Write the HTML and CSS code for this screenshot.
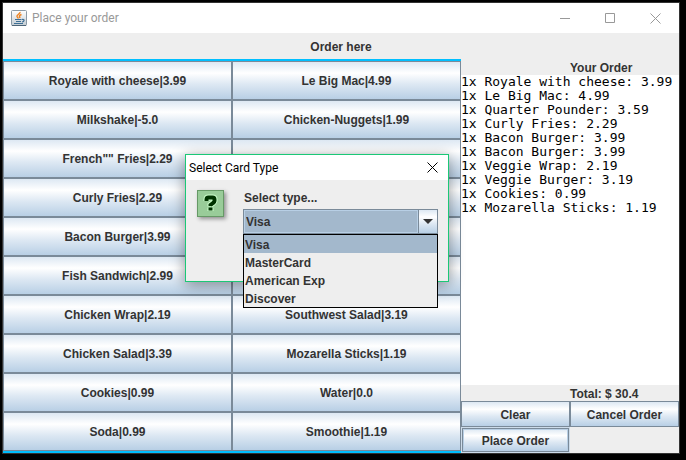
FILE: index.html
```html
<!DOCTYPE html>
<html lang="en">
<head>
<meta charset="utf-8">
<title>Place your order</title>
<link rel="stylesheet" href="styles.css">
</head>
<body>
<div class="window">
  <header class="titlebar">
    <svg class="java" width="16" height="16" viewBox="0 0 16 16" aria-hidden="true">
      <defs><linearGradient id="tile" x1="0" y1="0" x2="0" y2="1"><stop offset="0" stop-color="#fff"/><stop offset="1" stop-color="#c3ccd3"/></linearGradient></defs>
      <rect x=".5" y=".5" width="15" height="15" rx="1" fill="url(#tile)" stroke="#8b9aa6"/>
      <path d="M1 15.5H15" stroke="#4d6578"/>
      <path d="M9 2C9.500 4 5.500 4.500 6 6.500Q6.500 7.500 7.500 8.500M10.500 4.500C7.500 5.500 8.500 6.500 9 8" fill="none" stroke="#ee8422" stroke-width="1.500"/>
      <path d="M4 9.500H10.500M5 11.500H10M3 13.500H12M11 9.500C14 9 13.500 11.500 11 12" fill="none" stroke="#3f7096" stroke-width="1.200"/>
    </svg>
    <h1 class="window-title">Place your order</h1>
    <div class="controls">
      <button class="control" aria-label="Minimize"><svg width="11" height="11" viewBox="0 0 11 11"><path d="M0 5.500H10"/></svg></button>
      <button class="control" aria-label="Maximize"><svg width="11" height="11" viewBox="0 0 11 11"><path d="M.5 .5H9.500V9.500H.5Z"/></svg></button>
      <button class="control" aria-label="Close"><svg width="11" height="11" viewBox="0 0 11 11"><path d="M.5 .5L10.500 10.500M10.500 .5L.5 10.500"/></svg></button>
    </div>
  </header>
  <h2 class="heading">Order here</h2>
  <main class="content">
    <section class="menu" aria-label="Menu">
      <button class="metal">Royale with cheese|3.99</button>
      <button class="metal">Le Big Mac|4.99</button>
      <button class="metal">Milkshake|-5.0</button>
      <button class="metal">Chicken-Nuggets|1.99</button>
      <button class="metal">French"" Fries|2.29</button>
      <button class="metal"></button>
      <button class="metal">Curly Fries|2.29</button>
      <button class="metal"></button>
      <button class="metal">Bacon Burger|3.99</button>
      <button class="metal"></button>
      <button class="metal">Fish Sandwich|2.99</button>
      <button class="metal"></button>
      <button class="metal">Chicken Wrap|2.19</button>
      <button class="metal">Southwest Salad|3.19</button>
      <button class="metal">Chicken Salad|3.39</button>
      <button class="metal">Mozarella Sticks|1.19</button>
      <button class="metal">Cookies|0.99</button>
      <button class="metal">Water|0.0</button>
      <button class="metal">Soda|0.99</button>
      <button class="metal">Smoothie|1.19</button>
    </section>
    <section class="order">
      <label class="order-label" for="order-list">Your Order</label>
      <textarea class="order-list" id="order-list" wrap="off" spellcheck="false">1x Royale with cheese: 3.99
1x Le Big Mac: 4.99
1x Quarter Pounder: 3.59
1x Curly Fries: 2.29
1x Bacon Burger: 3.99
1x Bacon Burger: 3.99
1x Veggie Wrap: 2.19
1x Veggie Burger: 3.19
1x Cookies: 0.99
1x Mozarella Sticks: 1.19</textarea>
      <p class="total">Total: $ 30.4</p>
      <div class="actions">
        <button class="metal">Clear</button>
        <button class="metal">Cancel Order</button>
        <button class="metal primary">Place Order</button>
      </div>
    </section>
  </main>
</div>

<div class="dialog" role="dialog" aria-labelledby="dialog-title">
  <header class="dialog-bar">
    <h2 class="dialog-title" id="dialog-title">Select Card Type</h2>
    <button class="dialog-close" aria-label="Close"><svg width="11" height="11" viewBox="0 0 11 11"><path d="M.5 .5L10.500 10.500M10.500 .5L.5 10.500"/></svg></button>
  </header>
  <div class="dialog-body">
    <div class="question">
      <svg width="27" height="27" viewBox="0 0 27 27" aria-hidden="true">
        <path class="mark-edge" d="M9.500 11V9.500Q9.500 7.500 11.500 7.500H15.500Q17.500 7.500 17.500 9.500V11Q17.500 12 16 13L13.500 15V16.500M13.500 17.500V21"/>
        <path class="mark" d="M9.500 11V9.500Q9.500 7.500 11.500 7.500H15.500Q17.500 7.500 17.500 9.500V11Q17.500 12 16 13L13.500 15V16M13.500 17.500V20.500"/>
      </svg>
    </div>
    <div class="field">
      <label class="field-label" for="card">Select type...</label>
      <div class="combo">
        <select class="combo-box" id="card">
          <option>Visa</option>
          <option>MasterCard</option>
          <option>American Exp</option>
          <option>Discover</option>
        </select>
        <span class="combo-arrow"><svg width="10" height="5" viewBox="0 0 10 5"><path d="M0 0H10L5 5Z"/></svg></span>
        <ul class="popup" role="listbox" aria-label="Card types">
          <li class="choice selected" role="option" aria-selected="true">Visa</li>
          <li class="choice" role="option">MasterCard</li>
          <li class="choice" role="option">American Exp</li>
          <li class="choice" role="option">Discover</li>
        </ul>
      </div>
    </div>
  </div>
</div>
</body>
</html>
```
FILE: styles.css
```css
* { box-sizing: border-box; }

:root {
  --line: #7a8a99;
  --panel: #eee;
  --ink: #333;
  --select: #a3b8cc;
  --metal: linear-gradient(#dde8f3, #fff 30%, #dde8f3 60%, #b8cfe5);
}

body {
  margin: 0;
  min-height: 100vh;
  display: flex;
  padding: 2px 6px 6px 2px;
  background: #000;
  color: var(--ink);
  font: bold 12px/16px "Liberation Sans", Arial, sans-serif;
}

h1, h2, p, ul { margin: 0; padding: 0; font: inherit; }
button, select { font: inherit; color: inherit; margin: 0; border-radius: 0; }

.window {
  flex: 1;
  display: flex;
  flex-direction: column;
  border: 1px solid #333;
  background: var(--panel);
}

.titlebar {
  display: flex;
  align-items: center;
  height: 30px;
  padding: 0 1px 0 8px;
  gap: 5px;
  background: #fff;
}

.window-title {
  flex: 1;
  color: #999;
  font: 12px/16px Roboto, "Noto Sans", sans-serif;
}

.controls { display: flex; }

.control {
  width: 45px;
  height: 28px;
  padding: 0;
  border: 0;
  background: none;
}

.control svg, .dialog-close svg { display: block; margin: auto; fill: none; stroke: #999; }

.heading { height: 26px; line-height: 28px; text-align: center; }

.content {
  flex: 1;
  display: grid;
  grid-template-columns: minmax(0, 21fr) minmax(0, 10fr);
}

.menu {
  display: grid;
  grid-template-columns: 1fr 1fr;
  grid-auto-rows: 1fr;
  border: solid #00bfff;
  border-width: 2px 0;
}

.metal {
  padding: 0;
  border: 1px solid var(--line);
  background: var(--metal);
  white-space: nowrap;
}

.order { display: flex; flex-direction: column; }

.order-label, .total { height: 16px; padding-left: 50%; line-height: 18px; }

.order-list {
  flex: 1;
  width: 100%;
  padding: 0;
  border: 0;
  outline: 0;
  resize: none;
  overflow: hidden;
  background: #fff;
  color: #000;
  font: 13px/14px "DejaVu Sans Mono", "Liberation Mono", monospace;
}

.actions {
  display: grid;
  grid-template-columns: 1fr 1fr;
  grid-auto-rows: 26px;
}

.actions .metal { padding-top: 2px; }

.primary { margin: 1px; box-shadow: inset 0 0 0 1px #b8cfe5, 0 0 0 1px #cddcea; }

.dialog {
  position: absolute;
  left: 185px;
  top: 154px;
  width: 264px;
  height: 128px;
  border: 1px solid #1bc876;
  background: var(--panel);
  box-shadow: 0 3px 14px rgba(0, 0, 0, .4);
}

.dialog-bar {
  display: flex;
  align-items: center;
  justify-content: space-between;
  height: 25px;
  padding: 0 10px 0 3px;
  background: #fff;
  color: #000;
}

.dialog-title { font: 12px/16px Roboto, "Noto Sans", sans-serif; }

.dialog-close { padding: 0; border: 0; background: none; }

.dialog-close svg { stroke: #000; }

.dialog-body { display: flex; gap: 19px; padding: 10px 10px 0 11px; }

.question {
  width: 27px;
  height: 27px;
  border: 1px solid #669966;
  background: #99cc99;
  box-shadow: 2px 2px 4px rgba(0, 0, 0, .4);
}

.question svg { display: block; margin: -1px; fill: none; }
.mark-edge { stroke: #ccffcc; stroke-width: 6; }
.mark { stroke: #003300; stroke-width: 4; }

.field { flex: 1; }

.field-label { display: block; height: 19px; padding-left: 1px; }

.combo { position: relative; display: flex; height: 25px; border: 1px solid var(--line); }

.combo-box {
  appearance: none;
  flex: 1;
  padding: 0 1px;
  border: 1px solid #b8cfe5;
  outline: 0;
  background: var(--select);
}

.combo-arrow {
  display: flex;
  align-items: center;
  justify-content: center;
  width: 19px;
  border-left: 1px solid var(--line);
  background: var(--metal);
}

.combo-arrow svg { fill: #333; }

.popup {
  position: absolute;
  top: 24px;
  left: -1px;
  right: -1px;
  border: 1px solid #000;
  background: var(--panel);
  list-style: none;
}

.choice { height: 18px; padding-left: 1px; line-height: 20px; }

.selected { background: var(--select); }
```
